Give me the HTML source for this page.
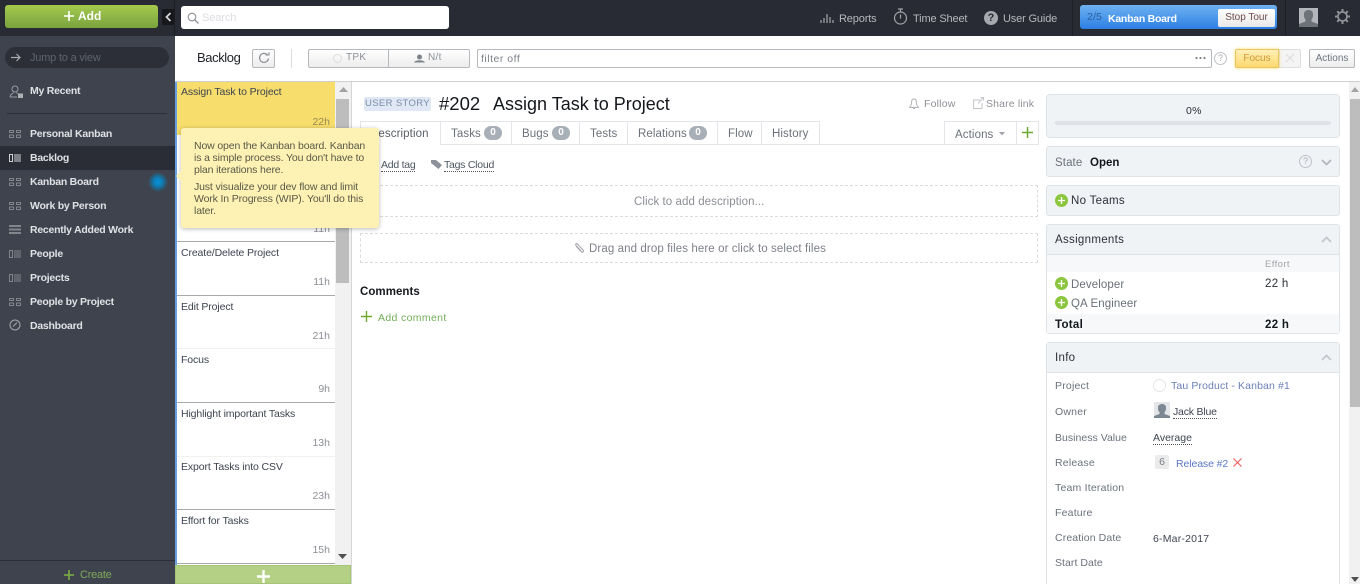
<!DOCTYPE html>
<html><head><meta charset="utf-8"><style>
html,body{margin:0;padding:0;width:1360px;height:584px;overflow:hidden;background:#fff}
body{position:relative;font-family:"Liberation Sans",sans-serif;font-size:11px;color:#3a3f4a}
.b{position:absolute;box-sizing:border-box}
.t{position:absolute;white-space:nowrap;line-height:14px;letter-spacing:.3px}
svg{position:absolute;overflow:visible}
.n{color:#dfe1e5;font-weight:bold;font-size:10.5px;left:30px;letter-spacing:-.25px}
.i{left:181px;color:#3d4350;font-size:10.5px;letter-spacing:-.12px}
.h{right:1030px;color:#8c8f95;font-size:10.5px;letter-spacing:0}
.m{color:#6b7079;font-size:11.5px;letter-spacing:.1px}
.k{left:1055px;color:#6b717c;font-size:10.5px;letter-spacing:.2px}
.p{background:#f0f3f6;border:1px solid #e0e3e6;border-radius:3px;left:1046px;width:294px}
.tab{top:121px;height:24px;border:1px solid #e3e5e8;border-bottom:1px solid #fff;background:#fff}
.bd{position:absolute;background:#a9afb7;color:#fff;border-radius:8px;height:14px;width:18px;line-height:14px;text-align:center;font-size:10px;font-weight:bold;letter-spacing:0}
.sep{left:177px;width:158px;height:1px;background:#aaa}
.sepl{left:177px;width:158px;height:1px;background:#f1f1f1}
.top{color:#b5b8bd;font-size:11px;letter-spacing:-.15px;top:12px}
.u{color:#4d5560;font-size:10.5px;border-bottom:1px dotted #555;line-height:12px;letter-spacing:-.25px}
</style></head><body>
<!-- top bar -->
<div class="b" style="left:0;top:0;width:1360px;height:36px;background:#282b33"></div>
<div class="b" style="left:174px;top:0;width:1px;height:36px;background:#1b1d22"></div>
<div class="b" style="left:5px;top:5px;width:153px;height:23px;border-radius:3px;background:linear-gradient(#a4ca4d,#7aa33f)"></div>
<svg style="left:64px;top:11px" width="10" height="10"><path d="M5 0V10M0 5H10" stroke="#fff" stroke-width="1.6"/></svg>
<div class="t" style="left:78px;top:9px;color:#fff;font-weight:bold;font-size:12px;letter-spacing:0">Add</div>
<div class="b" style="left:162px;top:9px;width:12px;height:16px;background:#16181c;border-radius:2px 0 0 2px"></div>
<svg style="left:165px;top:12px" width="7" height="10"><path d="M5.500 1L1.500 5L5.500 9" fill="none" stroke="#d4d6da" stroke-width="1.800"/></svg>
<div class="b" style="left:181px;top:6px;width:268px;height:23px;background:#fff;border-radius:3px"></div>
<svg style="left:187px;top:12px" width="12" height="12"><circle cx="5" cy="5" r="3.800" fill="none" stroke="#8d9199" stroke-width="1.100"/><path d="M8 8L11.500 11.500" stroke="#8d9199" stroke-width="1.300"/></svg>
<div class="t" style="left:202px;top:11px;color:#dcdee2;font-size:11px;letter-spacing:-.1px">Search</div>

<svg style="left:820px;top:12px" width="15" height="11"><path d="M1 8V11M4 6V11M7 2V11M10 5V11M13 8V11" stroke="#8b8e94" stroke-width="1.500"/></svg>
<div class="t top" style="left:839px">Reports</div>
<svg style="left:893px;top:8px" width="16" height="18"><path d="M5 1H10M7.500 1V4" stroke="#a0a3a8" stroke-width="1.200"/><circle cx="7.500" cy="10" r="6" fill="none" stroke="#a0a3a8" stroke-width="1.200"/><path d="M7.500 6.500V10.500" stroke="#a0a3a8" stroke-width="1.200"/></svg>
<div class="t top" style="left:913px">Time Sheet</div>
<div class="b" style="left:984px;top:11px;width:14px;height:14px;border-radius:50%;background:#a5a8ad;color:#282b33;font-weight:bold;font-size:11px;line-height:14px;text-align:center">?</div>
<div class="t top" style="left:1003px">User Guide</div>
<div class="b" style="left:1072px;top:0;width:1px;height:36px;background:#1d1f25"></div>
<div class="b" style="left:1080px;top:5px;width:197px;height:24px;border-radius:3px;background:linear-gradient(#6fb2f2,#2c7fe3)"></div>
<div class="t" style="left:1087px;top:10px;color:#2a5f9e;font-size:10.500px;letter-spacing:.1px">2/5</div>
<div class="t" style="left:1108px;top:12px;color:#fff;font-size:10.500px;font-weight:bold;letter-spacing:-.25px">Kanban Board</div>
<div class="b" style="left:1218px;top:9px;width:57px;height:18px;background:linear-gradient(#fff,#e8e8e8);border-radius:2px;color:#6d4a4a;font-size:10px;line-height:17px;text-align:center">Stop Tour</div>
<div class="b" style="left:1285px;top:0;width:1px;height:36px;background:#1d1f25"></div>
<svg style="left:1299px;top:8px" width="19" height="19"><rect width="19" height="19" fill="#b3b7bb"/><path d="M0 19V16L6.500 13.500V11.500C5 10 5 8 5 6C5 3.500 7 2 9.500 2S14 3.500 14 6C14 8 14 10 12.500 11.500V13.500L19 16V19Z" fill="#6d7278"/></svg>
<svg style="left:1335px;top:9px" width="15" height="15" viewBox="0 0 15 15"><circle cx="7.500" cy="7.500" r="4.500" fill="none" stroke="#8f9297" stroke-width="1.700"/><path d="M7.500 0V3M7.500 12V15M0 7.500H3M12 7.500H15M2.200 2.200L4.300 4.300M10.700 10.700L12.800 12.800M12.800 2.200L10.700 4.300M4.300 10.700L2.200 12.800" stroke="#8f9297" stroke-width="2"/></svg>

<!-- sidebar -->
<div class="b" style="left:0;top:36px;width:175px;height:548px;background:#3f434e"></div>
<div class="b" style="left:5px;top:47px;width:164px;height:21px;border-radius:11px;background:#2c2f37"></div>
<svg style="left:11px;top:53px" width="10" height="9"><path d="M0 4.500H9M5.500 1L9 4.500L5.500 8" fill="none" stroke="#a9acb1" stroke-width="1.200"/></svg>
<div class="t" style="left:30px;top:51px;color:#5f636c;font-size:11px;letter-spacing:-.2px">Jump to a view</div>
<svg style="left:9px;top:85px" width="15" height="14"><circle cx="6" cy="4" r="3" fill="none" stroke="#979aa0"/><path d="M1 12C1 9 4 9 4.500 7.500M7.500 7.500C8 8.500 9 8.500 9.500 9M1 12H8" fill="none" stroke="#979aa0"/><rect x="9" y="8.500" width="5" height="4.500" fill="#aeb1b5"/></svg>
<div class="t n" style="top:84px">My Recent</div>
<div class="b" style="left:7px;top:113px;width:160px;height:1px;background:#2c2f37"></div>
<div class="b" style="left:0;top:146px;width:175px;height:24px;background:#2a2d35"></div>
<svg style="left:9px;top:130px" width="12" height="8"><path d="M.5.500H4.500V2.500H.5ZM.5 5H4.500V7.500H.5ZM7.500.500H11.500V2.500H7.500ZM7.500 5H11.500V7.500H7.500Z" fill="none" stroke="#82858c"/></svg>
<div class="t n" style="top:127px">Personal Kanban</div>
<svg style="left:9px;top:154px" width="12" height="8"><path d="M.5.500H3.500V7.500H.5Z" fill="none" stroke="#d0d2d6"/><path d="M5 1H12M5 3H12M5 5H12M5 7H12" stroke="#d0d2d6"/></svg>
<div class="t n" style="top:151px">Backlog</div>
<svg style="left:9px;top:178px" width="12" height="8"><path d="M.5.500H4.500V2.500H.5ZM.5 5H4.500V7.500H.5ZM7.500.500H11.500V2.500H7.500ZM7.500 5H11.500V7.500H7.500Z" fill="none" stroke="#82858c"/></svg>
<div class="t n" style="top:175px">Kanban Board</div>
<div class="b" style="left:148px;top:172px;width:20px;height:20px;border-radius:50%;background:radial-gradient(circle closest-side,#0a90d6 0,#0b84c0 35%,rgba(14,120,172,.65) 65%,rgba(62,66,77,0) 100%)"></div>
<svg style="left:9px;top:202px" width="12" height="8"><path d="M.5.500H4.500V2.500H.5ZM.5 5H4.500V7.500H.5ZM7.500.500H11.500V2.500H7.500ZM7.500 5H11.500V7.500H7.500Z" fill="none" stroke="#82858c"/></svg>
<div class="t n" style="top:199px">Work by Person</div>
<svg style="left:9px;top:225px" width="12" height="9"><path d="M0 1H12M0 4.500H12M0 8H12" stroke="#82858c" stroke-width="2"/></svg>
<div class="t n" style="top:223px">Recently Added Work</div>
<svg style="left:9px;top:250px" width="12" height="8"><path d="M.5.500H3.500V7.500H.5Z" fill="none" stroke="#82858c"/><path d="M5 1H12M5 3H12M5 5H12M5 7H12" stroke="#82858c"/></svg>
<div class="t n" style="top:247px">People</div>
<svg style="left:9px;top:274px" width="12" height="8"><path d="M.5.500H3.500V7.500H.5Z" fill="none" stroke="#82858c"/><path d="M5 1H12M5 3H12M5 5H12M5 7H12" stroke="#82858c"/></svg>
<div class="t n" style="top:271px">Projects</div>
<svg style="left:9px;top:298px" width="12" height="8"><path d="M.5.500H4.500V2.500H.5ZM.5 5H4.500V7.500H.5ZM7.500.500H11.500V2.500H7.500ZM7.500 5H11.500V7.500H7.500Z" fill="none" stroke="#82858c"/></svg>
<div class="t n" style="top:295px">People by Project</div>
<svg style="left:9px;top:319px" width="12" height="12"><circle cx="6" cy="6" r="5" fill="none" stroke="#a5a8ad"/><path d="M4 7.500L8 3.500" stroke="#a5a8ad"/></svg>
<div class="t n" style="top:319px">Dashboard</div>
<div class="b" style="left:0;top:560px;width:175px;height:1px;background:#2c2f37"></div>
<svg style="left:64px;top:570px" width="10" height="10"><path d="M5 0V10M0 5H10" stroke="#7fb446" stroke-width="1.500"/></svg>
<div class="t" style="left:80px;top:568px;color:#7fa95a;font-size:11px;letter-spacing:-.25px">Create</div>

<!-- toolbar -->
<div class="t" style="left:197px;top:51px;color:#1f2227;font-size:13px;letter-spacing:-.4px">Backlog</div>
<div class="b" style="left:252px;top:49px;width:23px;height:19px;border:1px solid #b5b8bc;border-radius:2px;background:linear-gradient(#fff,#ececec)"></div>
<svg style="left:258px;top:52px" width="12" height="12"><path d="M9.500 3A4.500 4.500 0 1 0 10.500 6.500" fill="none" stroke="#8c9096" stroke-width="1.200"/><path d="M7.500 3H11V0" fill="none" stroke="#8c9096"/></svg>
<div class="b" style="left:291px;top:49px;width:1px;height:19px;background:#dcdcdc"></div>
<div class="b" style="left:308px;top:49px;width:81px;height:19px;border:1px solid #b5b8bc;border-radius:2px 0 0 2px;background:linear-gradient(#fff,#ececec)"></div>
<div class="b" style="left:388px;top:49px;width:82px;height:19px;border:1px solid #b5b8bc;border-radius:0 2px 2px 0;background:linear-gradient(#fff,#ececec)"></div>
<div class="b" style="left:333px;top:54px;width:9px;height:9px;border:1px solid #dcdcdc;border-radius:50%"></div>
<div class="t" style="left:346px;top:51px;color:#8b8f96;font-size:10px">TPK</div>
<svg style="left:414px;top:54px" width="11" height="9"><circle cx="5.500" cy="3" r="2.500" fill="#7e838a"/><path d="M0 8.500C1 5.500 10 5.500 11 8.500Z" fill="#7e838a"/></svg>
<div class="t" style="left:428px;top:51px;color:#8b8f96;font-size:10px">N/t</div>
<div class="b" style="left:477px;top:49px;width:735px;height:19px;border:1px solid #b5b8bc;border-radius:2px;background:#fff"></div>
<div class="t" style="left:481px;top:52px;color:#7d8087;font-size:10.500px;letter-spacing:.5px">filter off</div>
<svg style="left:1195px;top:57px" width="12" height="3"><circle cx="1.500" cy="1" r="1.100" fill="#7f8389"/><circle cx="5.500" cy="1" r="1.100" fill="#7f8389"/><circle cx="9.500" cy="1" r="1.100" fill="#7f8389"/></svg>
<div class="b" style="left:1214px;top:52px;width:13px;height:13px;border:1px solid #bfc2c6;border-radius:50%;color:#a8abb0;font-size:9px;line-height:11px;text-align:center">?</div>
<div class="b" style="left:1279px;top:49px;width:22px;height:19px;border:1px solid #dedede;border-radius:0 2px 2px 0;background:#f4f4f4"></div>
<svg style="left:1285px;top:53px" width="10" height="10"><path d="M1 1L9 9M9 1L1 9" stroke="#d9dadc"/></svg>
<div class="b" style="left:1235px;top:49px;width:44px;height:19px;border:1px solid #e9c463;border-radius:2px 0 0 2px;background:linear-gradient(#fff0b8,#fdd86e);box-shadow:0 0 3px #ffdf70;color:#c99a3a;font-size:10px;line-height:17px;text-align:center">Focus</div>
<div class="b" style="left:1309px;top:49px;width:46px;height:19px;border:1px solid #b5b8bc;border-radius:2px;background:linear-gradient(#fff,#ececec);color:#6f7680;font-size:10px;line-height:17px;text-align:center">Actions</div>
<div class="b" style="left:175px;top:81px;width:1185px;height:1px;background:#cfcfcf"></div>

<!-- list -->
<div class="b" style="left:175px;top:82px;width:2px;height:483px;background:#6a9fe0"></div>
<div class="b" style="left:177px;top:82px;width:158px;height:53px;background:#f6dd6c"></div>
<div class="b" style="left:335px;top:82px;width:16px;height:483px;background:#f1f1f1"></div>
<div class="b" style="left:351px;top:82px;width:1px;height:502px;background:#d6d6d6"></div>
<svg style="left:339px;top:87px" width="9" height="5"><path d="M0 5L4.500 0L9 5Z" fill="#a3a3a3"/></svg>
<div class="b" style="left:336px;top:99px;width:13px;height:184px;background:#bdbdbd"></div>
<svg style="left:338px;top:554px" width="9" height="5"><path d="M0 0L4.500 5L9 0Z" fill="#505050"/></svg>
<div class="t i" style="top:85px">Assign Task to Project</div><div class="t h" style="top:115px;color:#9a8a50">22h</div>
<div class="t h" style="top:222px">11h</div>
<div class="b sep" style="top:241px"></div>
<div class="t i" style="top:246px">Create/Delete Project</div><div class="t h" style="top:275px">11h</div>
<div class="b sep" style="top:295px"></div>
<div class="t i" style="top:300px">Edit Project</div><div class="t h" style="top:329px">21h</div>
<div class="b sepl" style="top:348px"></div>
<div class="t i" style="top:353px">Focus</div><div class="t h" style="top:382px">9h</div>
<div class="b sep" style="top:402px"></div>
<div class="t i" style="top:407px">Highlight important Tasks</div><div class="t h" style="top:436px">13h</div>
<div class="b sepl" style="top:456px"></div>
<div class="t i" style="top:460px">Export Tasks into CSV</div><div class="t h" style="top:489px">23h</div>
<div class="b sep" style="top:509px"></div>
<div class="t i" style="top:514px">Effort for Tasks</div><div class="t h" style="top:543px">15h</div>
<div class="b sep" style="top:563px"></div>
<div class="b" style="left:175px;top:565px;width:176px;height:19px;background:#b3d085;border:1px solid #a4c574"></div>
<svg style="left:257px;top:570px" width="13" height="13"><path d="M6.500 0V13M0 6.500H13" stroke="#fff" stroke-width="2.400"/></svg>

<!-- main header -->
<div class="b" style="left:364px;top:97px;width:67px;height:14px;background:#dfe8f4;border-radius:2px;color:#7b8ea8;font-size:9.500px;line-height:14px;text-align:center;letter-spacing:.35px;white-space:nowrap">USER STORY</div>
<div class="t" style="left:439px;top:93px;color:#14171c;font-size:18.500px;line-height:22px;letter-spacing:0">#202</div>
<div class="t" style="left:493px;top:93px;color:#14171c;font-size:18px;line-height:22px;letter-spacing:0">Assign Task to Project</div>
<svg style="left:909px;top:98px" width="10" height="12"><path d="M5 1C2.500 1 2.500 3.500 2.500 5.500C2.500 7.500 1 8.500 .5 9.500H9.500C9 8.500 7.500 7.500 7.500 5.500C7.500 3.500 7.500 1 5 1ZM4 10.500H6" fill="none" stroke="#b0b3b8"/></svg>
<div class="t" style="left:924px;top:97px;color:#8d9096;font-size:10.500px;letter-spacing:.2px">Follow</div>
<svg style="left:973px;top:97px" width="11" height="12"><path d="M7 3H.5V11.500H9V6M5 6.500L10.500.500M7.500.500H10.500V3.500" fill="none" stroke="#c4c6c9"/></svg>
<div class="t" style="left:986px;top:97px;color:#8d9096;font-size:10.500px;letter-spacing:.15px">Share link</div>

<!-- tabs -->
<div class="b" style="left:360px;top:144px;width:679px;height:1px;background:#e3e5e8"></div>
<div class="b tab" style="left:360px;width:81px"></div>
<div class="b tab" style="left:440px;width:72px;border-bottom-color:#e3e5e8"></div>
<div class="b tab" style="left:511px;width:69px;border-bottom-color:#e3e5e8"></div>
<div class="b tab" style="left:579px;width:49px;border-bottom-color:#e3e5e8"></div>
<div class="b tab" style="left:627px;width:91px;border-bottom-color:#e3e5e8"></div>
<div class="b tab" style="left:717px;width:45px;border-bottom-color:#e3e5e8"></div>
<div class="b tab" style="left:761px;width:59px;border-bottom-color:#e3e5e8"></div>
<div class="b tab" style="left:944px;width:73px;border-bottom-color:#e3e5e8"></div>
<div class="b tab" style="left:1016px;width:23px;border-bottom-color:#e3e5e8"></div>
<div class="t m" style="left:370px;top:127px;color:#5a5f68">Description</div>
<div class="t m" style="left:451px;top:127px">Tasks</div><div class="bd" style="left:484px;top:126px">0</div>
<div class="t m" style="left:522px;top:127px">Bugs</div><div class="bd" style="left:552px;top:126px">0</div>
<div class="t m" style="left:590px;top:127px">Tests</div>
<div class="t m" style="left:638px;top:127px">Relations</div><div class="bd" style="left:689px;top:126px">0</div>
<div class="t m" style="left:728px;top:127px">Flow</div>
<div class="t m" style="left:772px;top:127px">History</div>
<div class="t m" style="left:955px;top:128px">Actions</div>
<svg style="left:999px;top:132px" width="6" height="4"><path d="M0 0H6L3 3.500Z" fill="#a0a3a8"/></svg>
<svg style="left:1022px;top:127px" width="11" height="11"><path d="M5.500 0V11M0 5.500H11" stroke="#6eaa2e" stroke-width="1.500"/></svg>

<div class="t u" style="left:381px;top:159px">Add tag</div>
<svg style="left:431px;top:159px" width="11" height="10"><path d="M0 1H5L11 6L7.500 10L0 4Z" fill="#8d929a"/></svg>
<div class="t u" style="left:444px;top:159px">Tags Cloud</div>

<div class="b" style="left:360px;top:185px;width:678px;height:32px;border:1px dashed #dcdcdc"></div>
<div class="t" style="left:634px;top:195px;color:#8b8e94;font-size:11.500px;letter-spacing:.07px">Click to add description...</div>
<div class="b" style="left:360px;top:233px;width:678px;height:30px;border:1px dashed #dcdcdc"></div>
<svg style="left:574px;top:242px" width="11" height="12"><path d="M2 4L7 9.500C8.500 11 10.500 9.500 9 8L3.500 2C2.500 1 1 2 2 3.500L7 9" fill="none" stroke="#a0a3a8"/></svg>
<div class="t" style="left:589px;top:242px;color:#7d8188;font-size:11.500px;letter-spacing:.1px">Drag and drop files here or click to select files</div>
<div class="t" style="left:360px;top:285px;color:#15181d;font-size:11.500px;font-weight:bold;letter-spacing:.05px">Comments</div>
<svg style="left:361px;top:311px" width="11" height="11"><path d="M5.500 0V11M0 5.500H11" stroke="#6eaa2e" stroke-width="1.400"/></svg>
<div class="t" style="left:378px;top:311px;color:#72ad58;font-size:10.500px;letter-spacing:.35px">Add comment</div>

<!-- right panels -->
<div class="b p" style="top:94px;height:44px;border-radius:4px"></div>
<div class="t" style="left:1186px;top:104px;color:#2a2d36;font-size:10.500px">0%</div>
<div class="b" style="left:1055px;top:121px;width:276px;height:4px;background:#dfe3e7;border-radius:2px"></div>
<div class="b p" style="top:146px;height:31px"></div>
<div class="t m" style="left:1055px;top:156px">State</div>
<div class="t" style="left:1090px;top:156px;color:#14171c;font-size:11.500px;font-weight:bold;letter-spacing:0">Open</div>
<div class="b" style="left:1299px;top:155px;width:13px;height:13px;border:1px solid #bfc3c8;border-radius:50%;color:#a8abb0;font-size:9px;line-height:11px;text-align:center">?</div>
<svg style="left:1321px;top:159px" width="11" height="7"><path d="M1 1L5.500 5.500L10 1" fill="none" stroke="#b2b7bd" stroke-width="1.800"/></svg>
<div class="b p" style="top:185px;height:31px"></div>
<div class="b" style="left:1055px;top:194px;width:13px;height:13px;border-radius:50%;background:#8cc63f"></div>
<svg style="left:1058px;top:197px" width="7" height="7"><path d="M3.500 0V7M0 3.500H7" stroke="#fff" stroke-width="1.300"/></svg>
<div class="t" style="left:1071px;top:194px;color:#2c3038;font-size:11.500px">No Teams</div>

<div class="b" style="left:1046px;top:224px;width:294px;height:110px;border:1px solid #e0e3e6;border-radius:3px;background:#fff"></div>
<div class="b" style="left:1047px;top:225px;width:292px;height:30px;background:#f0f3f6;border-bottom:1px solid #e0e3e6"></div>
<div class="b" style="left:1047px;top:255px;width:292px;height:17px;background:#f6f8f9"></div>
<div class="b" style="left:1047px;top:314px;width:292px;height:19px;background:#f6f8f9"></div>
<div class="t" style="left:1055px;top:233px;color:#2c3038;font-size:11.500px">Assignments</div>
<svg style="left:1321px;top:236px" width="11" height="7"><path d="M1 6L5.500 1.500L10 6" fill="none" stroke="#c3c7cc" stroke-width="1.800"/></svg>
<div class="t" style="left:1265px;top:258px;color:#a2a5aa;font-size:9.500px;letter-spacing:.4px">Effort</div>
<div class="b" style="left:1055px;top:277px;width:13px;height:13px;border-radius:50%;background:#8cc63f"></div>
<svg style="left:1058px;top:280px" width="7" height="7"><path d="M3.500 0V7M0 3.500H7" stroke="#fff" stroke-width="1.300"/></svg>
<div class="t m" style="left:1071px;top:278px">Developer</div>
<div class="t" style="left:1265px;top:277px;color:#2c3038;font-size:11.500px">22 h</div>
<div class="b" style="left:1055px;top:296px;width:13px;height:13px;border-radius:50%;background:#8cc63f"></div>
<svg style="left:1058px;top:299px" width="7" height="7"><path d="M3.500 0V7M0 3.500H7" stroke="#fff" stroke-width="1.300"/></svg>
<div class="t m" style="left:1071px;top:297px">QA Engineer</div>
<div class="t" style="left:1055px;top:318px;color:#14171c;font-size:11.500px;font-weight:bold">Total</div>
<div class="t" style="left:1265px;top:318px;color:#14171c;font-size:11.500px;font-weight:bold">22 h</div>

<div class="b" style="left:1046px;top:342px;width:294px;height:260px;border:1px solid #e0e3e6;border-radius:3px;background:#fff"></div>
<div class="b" style="left:1047px;top:343px;width:292px;height:30px;background:#f0f3f6;border-bottom:1px solid #e0e3e6"></div>
<div class="t" style="left:1055px;top:351px;color:#2c3038;font-size:11.500px">Info</div>
<svg style="left:1321px;top:354px" width="11" height="7"><path d="M1 6L5.500 1.500L10 6" fill="none" stroke="#c3c7cc" stroke-width="1.800"/></svg>
<div class="t k" style="top:379px">Project</div>
<div class="b" style="left:1153px;top:379px;width:13px;height:13px;border:1px solid #e4e5e7;border-radius:50%"></div>
<div class="t" style="left:1171px;top:379px;color:#6a7fb8;font-size:10.500px;letter-spacing:.12px">Tau Product - Kanban #1</div>
<div class="t k" style="top:405px">Owner</div>
<svg style="left:1154px;top:402px" width="16" height="16"><rect width="16" height="16" rx="1" fill="#e3e5e8"/><path d="M0 16V14L5.500 12V10C4 9 4 7 4 5.500C4 3 6 2 8 2S12 3 12 5.500C12 7 12 9 10.500 10V12L16 14V16Z" fill="#7b8793"/></svg>
<div class="t u" style="left:1173px;top:406px;color:#3d4350;letter-spacing:-.2px">Jack Blue</div>
<div class="t k" style="top:431px;letter-spacing:.02px">Business Value</div>
<div class="t u" style="left:1153px;top:432px;color:#3d4350;letter-spacing:0">Average</div>
<div class="t k" style="top:456px">Release</div>
<div class="b" style="left:1155px;top:455px;width:14px;height:14px;background:#ebebeb;border-radius:2px;color:#7b7f85;font-size:10.500px;line-height:14px;text-align:center">6</div>
<div class="t" style="left:1176px;top:457px;color:#5a78c6;font-size:10.500px;letter-spacing:-.1px">Release #2</div>
<svg style="left:1233px;top:458px" width="9" height="9"><path d="M.5.500L8.500 8.500M8.500.500L.5 8.500" stroke="#ee5b5b" stroke-width="1.100"/></svg>
<div class="t k" style="top:481px">Team Iteration</div>
<div class="t k" style="top:506px">Feature</div>
<div class="t k" style="top:531px;letter-spacing:.12px">Creation Date</div>
<div class="t" style="left:1153px;top:532px;color:#3d4350;font-size:10.500px;letter-spacing:.2px">6-Mar-2017</div>
<div class="t k" style="top:556px;letter-spacing:.05px">Start Date</div>

<!-- main scrollbar -->
<div class="b" style="left:1349px;top:82px;width:11px;height:502px;background:#f1f1f1"></div>
<svg style="left:1351px;top:87px" width="8" height="5"><path d="M0 5L4 0L8 5Z" fill="#a3a3a3"/></svg>
<div class="b" style="left:1350px;top:99px;width:10px;height:308px;background:#bdbdbd"></div>
<svg style="left:1351px;top:577px" width="8" height="5"><path d="M0 0L4 5L8 0Z" fill="#505050"/></svg>

<!-- tooltip -->
<div class="b" style="left:181px;top:128px;width:198px;height:100px;background:#fdf2b3;border-radius:3px;box-shadow:0 1px 5px rgba(0,0,0,.28)"></div>
<svg style="left:176px;top:171px" width="5" height="10"><path d="M5 0L0 5L5 10Z" fill="#fdf2b3"/></svg>
<div class="t" style="left:194px;top:140px;color:#5a5748;font-size:10.500px;line-height:12px;letter-spacing:-.14px">Now open the Kanban board. Kanban<br>is a simple process. You don't have to<br>plan iterations here.</div>
<div class="t" style="left:194px;top:181px;color:#5a5748;font-size:10.500px;line-height:12px;letter-spacing:-.14px">Just visualize your dev flow and limit<br>Work In Progress (WIP). You'll do this<br>later.</div>
</body></html>
